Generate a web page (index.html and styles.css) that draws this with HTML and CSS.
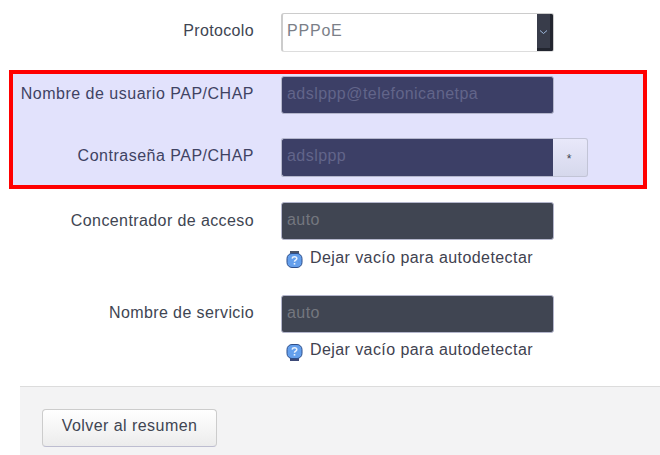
FILE: index.html
```html
<!DOCTYPE html>
<html lang="es">
  <head>
    <meta charset="UTF-8" />
    <title>Protocolo PPPoE</title>
    <link rel="stylesheet" href="styles.css">
  </head>
  <body>
    <div class="form">
      <div class="row row-select">
        <label class="label">Protocolo</label>
        <div class="select">
          <span class="select-value">PPPoE</span>
          <span class="select-arrow">
            <svg width="9" height="6" viewBox="0 0 9 6"><path d="M1 1.5 L4.5 4.5 L8 1.5" fill="none" stroke="#9db8dc" stroke-width="1" /></svg>
          </span>
        </div>
      </div>

      <div class="highlight">
        <div class="row row-user">
          <label class="label">Nombre de usuario PAP/CHAP</label>
          <div class="input input-blue">adslppp@telefonicanetpa</div>
        </div>
        <div class="row row-pass">
          <label class="label">Contraseña PAP/CHAP</label>
          <div class="input-group">
            <div class="input input-blue input-joined">adslppp</div>
            <button class="addon">*</button>
          </div>
        </div>
      </div>

      <div class="row row-ac">
        <label class="label">Concentrador de acceso</label>
        <div>
          <div class="input input-dark">auto</div>
          <div class="hint">
            <svg class="hint-icon" width="17" height="18" viewBox="0 0 17 18">
              <rect x="4" y="0" width="9" height="4" fill="#4a5468" />
              <rect x="1" y="2.5" width="15" height="14" rx="5" fill="#649fec" stroke="#2f4f8a" />
              <path d="M6.2 7.6 C6.4 5.2 10.8 5.2 10.8 7.6 C10.8 9.2 8.5 9.2 8.5 10.8" fill="none" stroke="#eaf2fc" stroke-width="1.5" />
              <rect x="7.7" y="12" width="1.6" height="1.6" fill="#eaf2fc" />
            </svg>
            <span>Dejar vacío para autodetectar</span>
          </div>
        </div>
      </div>

      <div class="row row-service">
        <label class="label">Nombre de servicio</label>
        <div>
          <div class="input input-dark">auto</div>
          <div class="hint">
            <svg class="hint-icon" width="17" height="18" viewBox="0 0 17 18">
              <rect x="4" y="14" width="9" height="4" fill="#3d4a78" />
              <rect x="1" y="1.5" width="15" height="14" rx="5" fill="#649fec" stroke="#2f4f8a" />
              <path d="M6.2 6.6 C6.4 4.2 10.8 4.2 10.8 6.6 C10.8 8.2 8.5 8.2 8.5 9.8" fill="none" stroke="#eaf2fc" stroke-width="1.5" />
              <rect x="7.7" y="11" width="1.6" height="1.6" fill="#eaf2fc" />
            </svg>
            <span>Dejar vacío para autodetectar</span>
          </div>
        </div>
      </div>
    </div>

    <div class="actions">
      <button class="btn">Volver al resumen</button>
    </div>
  </body>
</html>
```

FILE: styles.css
```css
* {
  box-sizing: border-box;
}

html,
body {
  height: 455px;
  overflow: hidden;
}

body {
  margin: 0;
  background-color: #fff;
  font-family: "Liberation Sans", Arial, sans-serif;
  font-size: 16px;
  letter-spacing: 0.45px;
  color: #404552;
}

.form {
  padding-top: 13px;
}

.row {
  display: grid;
  grid-template-columns: 254px 1fr;
  column-gap: 27px;
}

.label {
  text-align: right;
  line-height: 36px;
  letter-spacing: 0.4px;
  white-space: nowrap;
}

.row-select {
  margin-bottom: 18px;
}

.row-select .label {
  letter-spacing: 0.35px;
}

.highlight {
  width: 638px;
  height: 119px;
  margin-left: 9px;
  margin-bottom: 13px;
  padding-top: 2px;
  border: 4px solid #f00;
  background-color: #e2e2fc;
}

.highlight .row {
  margin-left: -13px;
}

.highlight .label {
  letter-spacing: 0.5px;
  color: #3f4263;
}

.row-user {
  margin-bottom: 24px;
}

.select {
  display: flex;
  width: 273px;
  height: 39px;
  background-color: #fff;
  border: 1px solid #ccc;
  border-left-width: 2px;
  border-bottom-color: #ddd;
  border-radius: 3px;
  overflow: hidden;
}

.select-value {
  flex: 1;
  padding-left: 4px;
  line-height: 34px;
  letter-spacing: 0.8px;
  color: #7b7f88;
}

.select-arrow {
  display: flex;
  align-items: center;
  justify-content: center;
  width: 16px;
  padding-top: 2px;
  background-color: #383c4a;
  border-right: 3px solid #22252f;
  border-bottom: 3px solid #22252f;
}

.input {
  width: 273px;
  height: 38px;
  padding-left: 5px;
  line-height: 33px;
  border: 1px solid #b4b6cc;
  border-radius: 3px;
}

.input-blue {
  background-color: #3c3f66;
  color: #62658a;
}

.input-dark {
  height: 38px;
  line-height: 34px;
  background-color: #404552;
  color: #74777f;
}

.input-group {
  display: flex;
  width: 307px;
}

.input-joined {
  height: 39px;
  width: 272px;
  border-right: 0;
  border-radius: 3px 0 0 3px;
}

.addon {
  width: 35px;
  height: 39px;
  padding: 2px 2px 0 0;
  font-family: inherit;
  font-size: 12px;
  color: #404552;
  background: linear-gradient(#e8e8fa, #d6d8ec);
  border: 1px solid #c2c4d6;
  border-left: 0;
  border-radius: 0 3px 3px 0;
}

.hint {
  display: flex;
  align-items: center;
  gap: 7px;
  height: 26px;
  margin-top: 5px;
  padding-left: 5px;
  letter-spacing: 0.42px;
  color: #3f4250;
}

.hint-icon {
  margin-top: 3px;
}

.row-ac {
  margin-bottom: 24px;
}

.row-ac .label {
  line-height: 38px;
}

.row-service {
  margin-bottom: 23px;
}

.row-service .hint {
  margin-top: 4px;
}

.actions {
  height: 69px;
  margin-left: 20px;
  padding: 22px 0 0 22px;
  background-color: #f3f3f4;
  border-top: 1px solid #dcdcdc;
}

.btn {
  width: 175px;
  height: 38px;
  padding: 0 0 5px;
  font-family: inherit;
  font-size: 16px;
  letter-spacing: 0.45px;
  color: #404552;
  background: linear-gradient(#fff, #ececec);
  border: 1px solid #ccc;
  border-bottom-color: #bdbdd0;
  border-radius: 4px;
}
```
